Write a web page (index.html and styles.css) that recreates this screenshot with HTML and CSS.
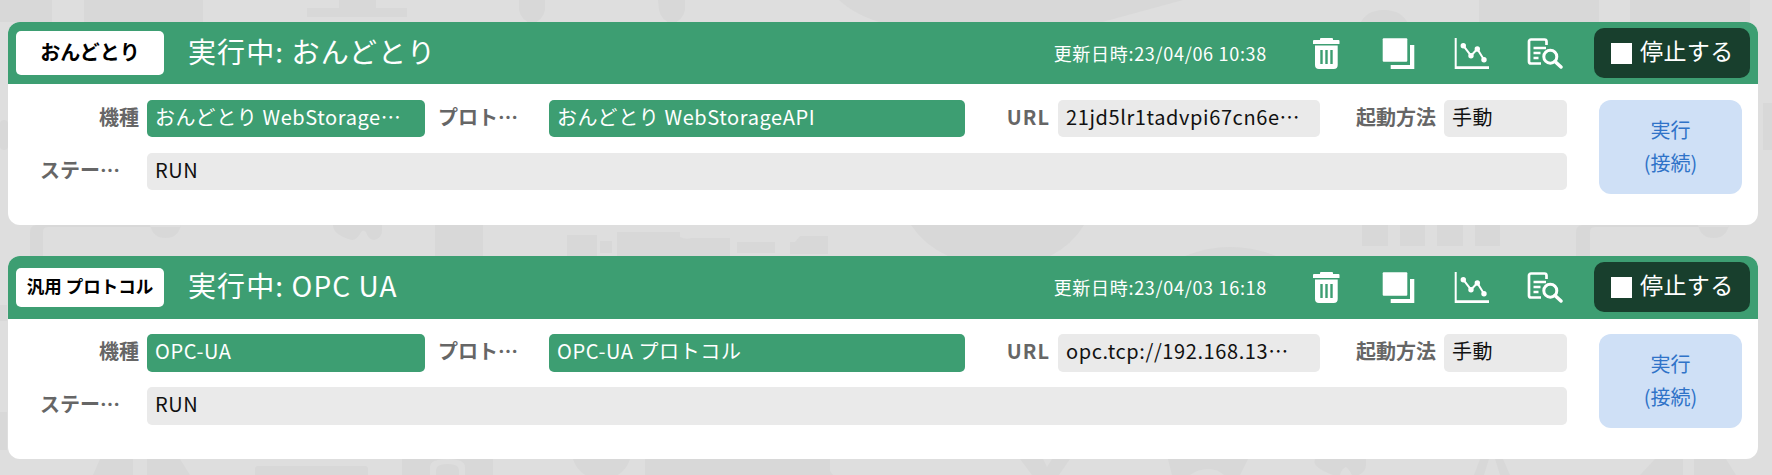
FILE: index.html
```html
<!DOCTYPE html>
<html lang="ja">
<head>
    <meta charset="UTF-8">
    <title>接続一覧</title>
    <link rel="stylesheet" href="styles.css">
</head>
<body>
    <svg class="icon-defs" width="0" height="0" aria-hidden="true">
        <defs>
            <symbol id="i-trash" viewBox="0 0 36 31">
                <path d="M12 2V1a1 1 0 0 1 1-1h11a1 1 0 0 1 1 1v1h5.500a1 1 0 0 1 1 1v2.500a.5.5 0 0 1-.5.5H5.500a.5.5 0 0 1-.5-.5V3a1 1 0 0 1 1-1z"/>
                <path fill-rule="evenodd" d="M7 7.500h22.700V27a4 4 0 0 1-4 4H11a4 4 0 0 1-4-4zM12.300 12v14h2.400V12zm5 0v14h2.400V12zm5 0v14h2.400V12z"/>
            </symbol>
            <symbol id="i-copy" viewBox="0 0 36 31">
                <rect x="1.700" y="0.300" width="24.600" height="23.400" rx="1"/>
                <path d="M29 7h4.300v24H9.700v-4H29z"/>
            </symbol>
            <symbol id="i-chart" viewBox="0 0 36 31">
                <path d="M.7 0h2v28.300H35V31H.7z"/>
                <path class="icon-line" d="M9.300 7.700L17 17.700 23.300 11 30 21.700"/>
                <circle cx="9.300" cy="7.700" r="2.700"/>
                <circle cx="17" cy="17.700" r="2.700"/>
                <circle cx="23.300" cy="11" r="2.700"/>
                <circle cx="30" cy="21.700" r="2.700"/>
            </symbol>
            <symbol id="i-search" viewBox="0 0 36 31">
                <path class="icon-line doc" d="M19.500 7V3.500a2 2 0 0 0-2-2H4a2 2 0 0 0-2 2v20a2 2 0 0 0 2 2h10"/>
                <path class="icon-line doc" d="M6.500 10H19M6.500 15h7M6.500 20h5"/>
                <circle class="icon-line lens" cx="23.300" cy="18.700" r="6.500"/>
                <path class="icon-line handle" d="M28 23.500l6 5.500"/>
            </symbol>
        </defs>
    </svg>

    <!-- ghosted factory drawing behind the cards -->
    <svg class="backdrop" width="1772" height="475" viewBox="0 0 1772 475" aria-hidden="true">
        <rect x="0" y="0" width="52" height="22"/>
        <rect x="84" y="0" width="119" height="22"/>
        <path d="M339 0h37v8h31v9H307V8h32z"/>
        <path d="M519 0h26v10q-2 10-13 14q-11-4-13-14z"/>
        <path d="M658 0h27v10q-2 10-13 14q-11-4-13-14z"/>
        <path d="M839 0H1183L1095 24H886q-30-8-47-24z"/>
        <path d="M1360 24q6-14 24-14q18 0 24 14z"/>
        <rect x="1479" y="0" width="120" height="22"/>
        <rect x="1630" y="0" width="120" height="22"/>
        <rect x="1763" y="103" width="9" height="47"/>
        <rect x="0" y="120" width="8" height="30" rx="4"/>
        <rect x="0" y="305" width="7" height="16"/>
        <rect x="0" y="412" width="7" height="38"/>

        <path d="M30 258V232q0-7 7-7h113q3 13 15.500 13q12.500 0 15.500-13h0v2H48q-5 0-5 5v26z"/>
        <path d="M333 225h49v6q0 7-8 9q-6-1-8-8q-3-3-5 0q-4 8-9 8q-19-5-19-15z"/>
        <rect x="435" y="225" width="48" height="31"/>
        <rect x="567" y="235" width="30" height="21"/>
        <rect x="600" y="241" width="12" height="12"/>
        <path d="M617 232h63v5q5 3 12 1h38v18H617z"/>
        <rect x="737" y="242" width="38" height="11"/>
        <path d="M790 242h5l5-6h28v18h-38z"/>
        <path d="M911 225H1084q-12 20-34 31H948q-24-11-37-31z"/>
        <rect x="1362" y="225" width="26" height="21"/>
        <rect x="1400" y="225" width="25" height="21"/>
        <rect x="1437" y="225" width="26" height="21"/>
        <rect x="1475" y="225" width="25" height="21"/>
        <path d="M1185 256q22-9 45-9q24 0 46 9z"/>
        <path d="M1576 258V232q0-7 7-7h115q3 13 15.500 13q12.500 0 15.500-13h0v2H1595q-5 0-5 5v26z"/>

        <path d="M100 459h33v16H93zM147 459h33l10 16h-43z"/>
        <rect x="255" y="466" width="113" height="12" rx="3"/>
        <path fill-rule="evenodd" d="M402 459h91v16h-91zM430 475v-8q0-8 17.500-8q17.500 0 17.500 8v8zM436 475h23v-5q0-6-11.500-6q-11.500 0-11.500 6z"/>
        <path d="M573 459h57q-3 10-12 16h-33q-9-6-12-16z"/>
        <path d="M645 459h185v12l3 4H645z"/>
        <path d="M1020 459h23l4 8l5-8h18l-11 16h-27z"/>
        <path d="M1168 459h80l-8 16h-16q-6-6-16-6q-10 0-18 6h-18z"/>
        <path d="M1315 459h51v6q0 6-7 10h-7q-3-6-6-8q-4 1-6 8h-7q-22-8-18-16z"/>
        <path d="M1480 459h9l-5 16h-10zM1495 459h8l7 16h-10z"/>
        <path d="M1655 459h28v16h-43zM1694 459h32l10 16h-42z"/>
    </svg>

    <main class="list">
        <section class="card">
            <header class="card-head">
                <div class="badge"><span>おんどとり</span></div>
                <h2 class="card-title">実行中: おんどとり</h2>
                <span class="updated">更新日時:23/04/06 10:38</span>
                <div class="tools">
                    <svg class="tool"><use href="#i-trash"/></svg>
                    <svg class="tool"><use href="#i-copy"/></svg>
                    <svg class="tool"><use href="#i-chart"/></svg>
                    <svg class="tool"><use href="#i-search"/></svg>
                </div>
                <button class="stop"><span class="stop-mark"></span><span class="stop-text">停止する</span></button>
            </header>
            <div class="card-body">
                <div class="fields">
                    <label class="lbl">機種</label>
                    <div class="val val-green">おんどとり WebStorage…</div>
                    <label class="lbl lbl-left">プロト…</label>
                    <div class="val val-green">おんどとり WebStorageAPI</div>
                    <label class="lbl lbl-url">URL</label>
                    <div class="val">21jd5lr1tadvpi67cn6e…</div>
                    <label class="lbl">起動方法</label>
                    <div class="val">手動</div>
                    <label class="lbl lbl-status">ステー…</label>
                    <div class="val val-wide">RUN</div>
                </div>
                <button class="run">実行<br>(接続)</button>
            </div>
        </section>

        <section class="card">
            <header class="card-head">
                <div class="badge badge-small"><span>汎用 プロトコル</span></div>
                <h2 class="card-title">実行中: OPC UA</h2>
                <span class="updated">更新日時:23/04/03 16:18</span>
                <div class="tools">
                    <svg class="tool"><use href="#i-trash"/></svg>
                    <svg class="tool"><use href="#i-copy"/></svg>
                    <svg class="tool"><use href="#i-chart"/></svg>
                    <svg class="tool"><use href="#i-search"/></svg>
                </div>
                <button class="stop"><span class="stop-mark"></span><span class="stop-text">停止する</span></button>
            </header>
            <div class="card-body">
                <div class="fields">
                    <label class="lbl">機種</label>
                    <div class="val val-green">OPC-UA</div>
                    <label class="lbl lbl-left">プロト…</label>
                    <div class="val val-green">OPC-UA プロトコル</div>
                    <label class="lbl lbl-url">URL</label>
                    <div class="val">opc.tcp://192.168.13…</div>
                    <label class="lbl">起動方法</label>
                    <div class="val">手動</div>
                    <label class="lbl lbl-status">ステー…</label>
                    <div class="val val-wide">RUN</div>
                </div>
                <button class="run">実行<br>(接続)</button>
            </div>
        </section>
    </main>
</body>
</html>
```

FILE: styles.css
```css
* {
    box-sizing: border-box;
}
html, body {
    height: 100%;
}
body {
    position: relative;
    margin: 0;
    overflow: hidden;
    background-color: #dedede;
    font-family: "Noto Sans CJK JP", "Noto Sans", sans-serif;
    color: #111;
}
.icon-defs {
    position: absolute;
}
.backdrop {
    position: absolute;
    top: 0;
    left: 0;
    fill: #d8d8d8;
    filter: blur(0.6px);
}
.list {
    position: relative;
    display: flex;
    flex-direction: column;
    gap: 31.4px;
    padding: 21.8px 14px 0 8px;
}
.card {
    height: 203px;
    background-color: #fff;
    border-radius: 12px;
    overflow: hidden;
}
.card-head {
    display: flex;
    align-items: center;
    height: 62.5px;
    padding: 0 8px;
    background-color: #3d9e72;
    color: #fff;
}
.badge {
    display: flex;
    align-items: center;
    justify-content: center;
    flex: 0 0 148px;
    height: 44px;
    padding-bottom: 3px;
    border-radius: 5px;
    background-color: #fff;
    color: #000;
    font-size: 20px;
    font-weight: 700;
}
.badge-small {
    height: 39px;
    font-size: 17.500px;
}
.card-title {
    flex: 1;
    margin: 0 0 4px 24px;
    font-size: 28px;
    font-weight: 400;
    letter-spacing: 1.1px;
}
.updated {
    font-size: 18px;
    letter-spacing: 0.7px;
}
.tools {
    display: flex;
    gap: 37px;
    margin: 0 31px 0 41px;
}
.tool {
    display: block;
    width: 36px;
    height: 31px;
    fill: #fff;
}
.icon-line {
    fill: none;
    stroke: #fff;
    stroke-width: 2;
}
.doc {
    stroke-width: 2.700;
}
.lens {
    stroke-width: 3;
}
.handle {
    stroke-width: 3.500;
    stroke-linecap: round;
}
.stop {
    display: flex;
    align-items: center;
    gap: 8px;
    flex: 0 0 156px;
    height: 50px;
    padding: 0 0 0 17px;
    border: 0;
    border-radius: 10px;
    background-color: #183f2d;
    color: #fff;
    font: inherit;
    font-size: 23px;
    letter-spacing: 0.4px;
}
.stop-mark {
    width: 21px;
    height: 21px;
    background-color: #fff;
}
.stop-text {
    margin-bottom: 6px;
}
.card-body {
    display: flex;
    padding: 15.500px 16px 0 0;
}
.fields {
    display: grid;
    grid-template-columns: 139px 278px 124px 416px 93px 262px 124px 123px;
    grid-auto-rows: 37.500px;
    row-gap: 15.500px;
    flex: 0 0 1559px;
}
.lbl {
    align-self: center;
    padding: 0 8px 4px 0;
    text-align: right;
    font-size: 20px;
    font-weight: 700;
    color: #666;
    white-space: nowrap;
}
.lbl-url {
    letter-spacing: 1px;
}
.lbl-left {
    padding-left: 13px;
    padding-right: 0;
    text-align: left;
}
.lbl-status {
    padding-left: 32px;
    padding-right: 0;
    text-align: left;
}
.val {
    display: flex;
    align-items: center;
    padding: 0 8px 4px;
    border-radius: 5px;
    background-color: #eaeaea;
    font-size: 20px;
    letter-spacing: 0.6px;
    white-space: nowrap;
    overflow: hidden;
}
.val-green {
    background-color: #3d9e72;
    color: #fff;
}
.val-wide {
    grid-column: 2 / -1;
}
.run {
    flex: 0 0 143px;
    height: 94px;
    margin-left: 32px;
    padding: 0 0 2px;
    border: 0;
    border-radius: 12px;
    background-color: #cfe0f6;
    color: #2f73c8;
    font: inherit;
    font-size: 20px;
    line-height: 33px;
}
```
